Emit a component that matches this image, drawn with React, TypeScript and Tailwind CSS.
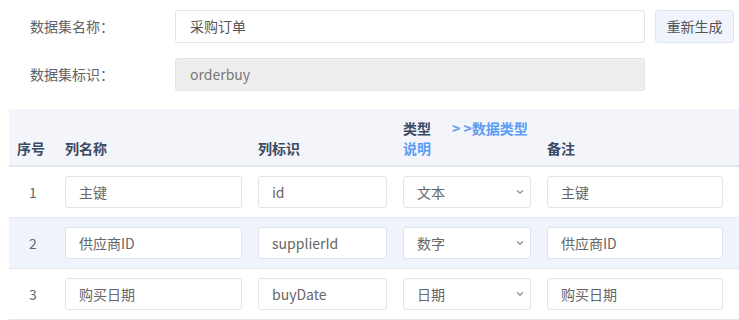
import { ChevronDown } from 'lucide-react'

type Row = { no: number; name: string; ident: string; type: string; remark: string }

const rows: Row[] = [
  { no: 1, name: '主键', ident: 'id', type: '文本', remark: '主键' },
  { no: 2, name: '供应商ID', ident: 'supplierId', type: '数字', remark: '供应商ID' },
  { no: 3, name: '购买日期', ident: 'buyDate', type: '日期', remark: '购买日期' },
]

const font = { fontFamily: '"Noto Sans CJK SC", "Noto Sans", sans-serif' }

function CellInput({ value, width }: { value: string; width: string }) {
  return (
    <div
      className={`${width} h-[32px] flex items-center px-[13px] bg-white border border-[#dfe4ec] rounded-[3px] text-[14px] text-[#666]`}
    >
      {value}
    </div>
  )
}

export default function App() {
  return (
    <div className="w-[739px] h-[320px] overflow-hidden bg-white" style={font}>
      {/* dataset form */}
      <div className="pt-[10px] pl-[30px] flex flex-col gap-[15px]">
        <div className="flex items-center">
          <div className="w-[145px] text-[14px] text-[#606266]">数据集名称：</div>
          <div className="w-[470px] h-[33px] flex items-center px-[14px] border border-[#dfe4ec] rounded-[3px] text-[14px] text-[#555]">
            采购订单
          </div>
          <button className="ml-[10px] w-[79px] h-[33px] border border-[#dfe5ef] bg-[#eff3fb] rounded-[3px] text-[14px] text-[#555]">
            重新生成
          </button>
        </div>
        <div className="flex items-center">
          <div className="w-[145px] text-[14px] text-[#606266]">数据集标识：</div>
          <div className="w-[470px] h-[33px] flex items-center px-[14px] border border-[#dfe4ec] rounded-[3px] bg-[#eeeeee] text-[14px] text-[#777]">
            orderbuy
          </div>
        </div>
      </div>

      {/* column table */}
      <div className="mt-[18px] ml-[9px] w-[730px]">
        <div className="flex h-[58px] bg-[#f3f5fa] border-b-2 border-[#dfe6ee] text-[14px] font-bold text-[#3b4a63] leading-[20px]">
          <div className="w-[48px] pl-[8px] self-end pb-[7px]">序号</div>
          <div className="w-[193px] pl-[8px] self-end pb-[7px]">列名称</div>
          <div className="w-[145px] pl-[8px] self-end pb-[7px]">列标识</div>
          <div className="w-[144px] pl-[8px] self-end pb-[7px]">
            <div className="flex">
              <span>类型</span>
              <span className="ml-[21px] text-[#5b9cf6]">&gt;&nbsp;&gt;数据类型</span>
            </div>
            <div className="text-[#5b9cf6]">说明</div>
          </div>
          <div className="w-[200px] pl-[8px] self-end pb-[7px]">备注</div>
        </div>

        {rows.map((r) => (
          <div
            key={r.no}
            className={`flex items-center h-[51px] border-b border-[#e3e8ef] ${r.no % 2 === 0 ? 'bg-[#eef3fc]' : 'bg-white'}`}
          >
            <div className="w-[48px] text-center text-[14px] text-[#666]">{r.no}</div>
            <div className="w-[193px] pl-[8px]">
              <CellInput value={r.name} width="w-[177px]" />
            </div>
            <div className="w-[145px] pl-[8px]">
              <CellInput value={r.ident} width="w-[129px]" />
            </div>
            <div className="w-[144px] pl-[8px]">
              <div className="w-[128px] h-[32px] flex items-center justify-between pl-[13px] pr-[5px] bg-white border border-[#dfe4ec] rounded-[3px] text-[14px] text-[#666]">
                <span>{r.type}</span>
                <ChevronDown size={10} strokeWidth={3.5} className="text-[#999]" />
              </div>
            </div>
            <div className="w-[200px] pl-[8px]">
              <CellInput value={r.remark} width="w-[176px]" />
            </div>
          </div>
        ))}
      </div>
    </div>
  )
}
